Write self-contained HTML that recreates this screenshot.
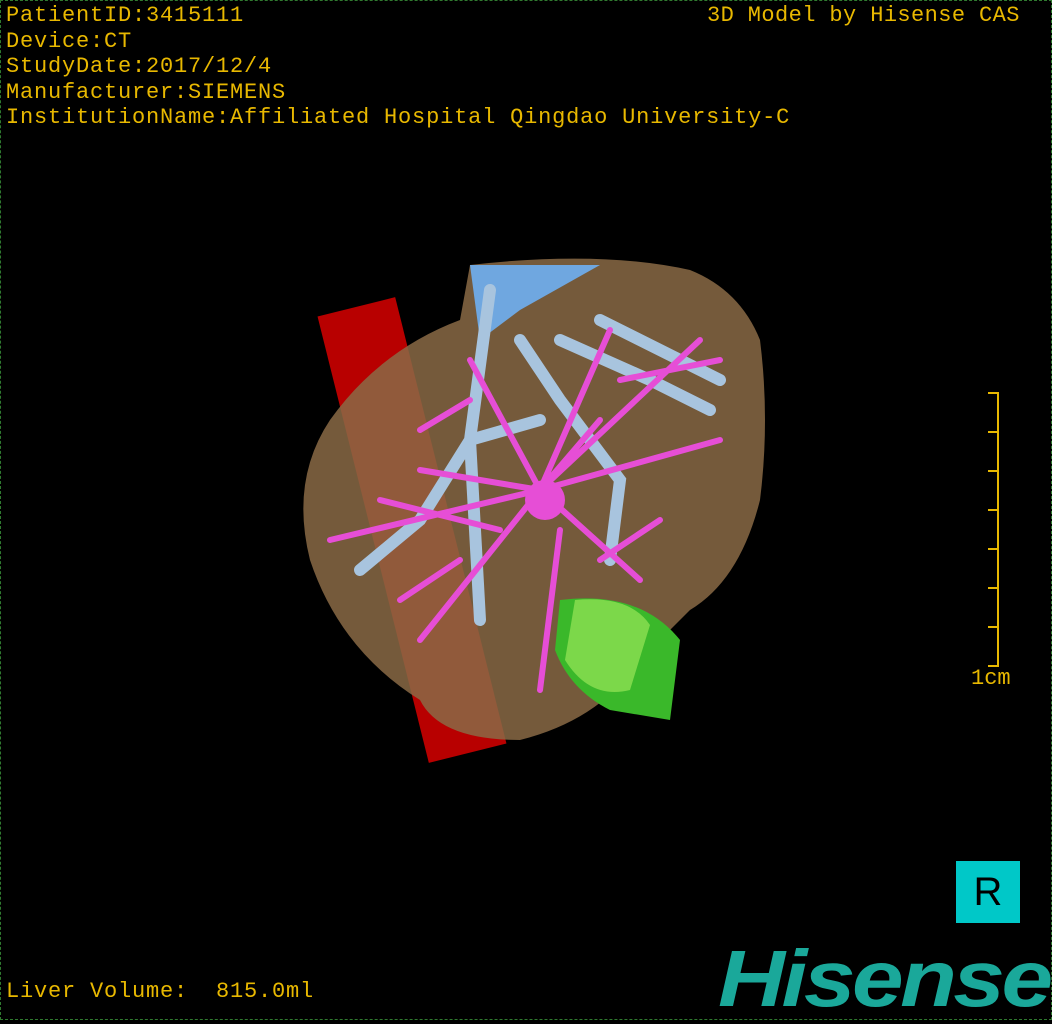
<!DOCTYPE html><html><head><meta charset="utf-8"><style>
body{margin:0;background:#000;width:1052px;height:1020px;overflow:hidden;position:relative;font-family:"Liberation Mono","DejaVu Sans Mono",monospace}
.b{position:absolute;left:0;top:0;width:1050px;height:1018px;border:1px dashed #2f7a2f}
.t{position:absolute;color:#e8b800;font-size:22px;line-height:25.5px;letter-spacing:0.8px;white-space:pre}
</style></head><body>
<div class="b"></div>
<div class="t" style="left:6px;top:3px">PatientID:3415111
Device:CT
StudyDate:2017/12/4
Manufacturer:SIEMENS
InstitutionName:Affiliated Hospital Qingdao University-C</div>
<div class="t" style="left:707px;top:3px;letter-spacing:0.4px">3D Model by Hisense CAS</div>
<div class="t" style="left:6px;top:979px">Liver Volume:  815.0ml</div>
<div class="t" style="left:971px;top:666px;letter-spacing:0">1cm</div>
<svg width="1052" height="1020" style="position:absolute;left:0;top:0">
<g stroke="#e8b800" stroke-width="2" fill="none">
<path d="M998 392V667"/><path d="M988 393h10M988 432h10M988 471h10M988 510h10M988 549h10M988 588h10M988 627h10M988 666h10"/>
</g>
<rect x="372" y="300" width="80" height="460" fill="#c00" transform="rotate(-14 412 530)" opacity=".9"/>
<path d="M470 265 Q600 250 690 270 Q740 290 760 340 Q770 420 760 500 Q740 580 690 610 L640 660 Q600 720 520 740 Q440 740 420 700 Q340 650 310 560 Q290 480 330 420 Q380 350 460 320 Z" fill="#8a6a45" opacity=".85"/>
<path d="M470 265 L600 265 L520 310 L480 340 Z" fill="#6fa7e0"/>
<path d="M560 600 Q640 590 680 640 L670 720 L610 710 Q570 690 555 650 Z" fill="#3ab82a"/>
<path d="M575 600 Q630 595 650 625 L630 690 Q590 700 565 660 Z" fill="#7cd84a"/>
<g stroke="#a8c4de" stroke-width="12" fill="none" stroke-linecap="round">
<path d="M490 290 L470 440 L480 620 M470 440 L420 520 L360 570 M520 340 L560 400 L620 480 L610 560 M560 340 L650 380 L710 410 M470 440 L540 420 M600 320 L720 380"/>
</g>
<g stroke="#e64ed6" stroke-width="6" fill="none" stroke-linecap="round">
<path d="M540 490 L470 360 M540 490 L610 330 M540 490 L700 340 M540 490 L720 440 M540 490 L420 470 M540 490 L330 540 M540 490 L420 640 M540 490 L640 580 M540 490 L600 420 M500 530 L380 500 M560 530 L540 690 M620 380 L720 360 M470 400 L420 430 M460 560 L400 600 M600 560 L660 520"/>
</g>
<circle cx="545" cy="500" r="20" fill="#e64ed6"/>
</svg>
<div style="position:absolute;left:956px;top:861px;width:64px;height:62px;background:#00c8c8;color:#000;font:40px 'Liberation Sans',sans-serif;text-align:center;line-height:62px">R</div>
<div style="position:absolute;left:718px;top:934px;color:#1aa89a;font:italic bold 80px 'Liberation Sans',sans-serif;letter-spacing:-3px;line-height:90px;transform:scaleX(1.16);transform-origin:0 0">Hisense</div>
</body></html>
